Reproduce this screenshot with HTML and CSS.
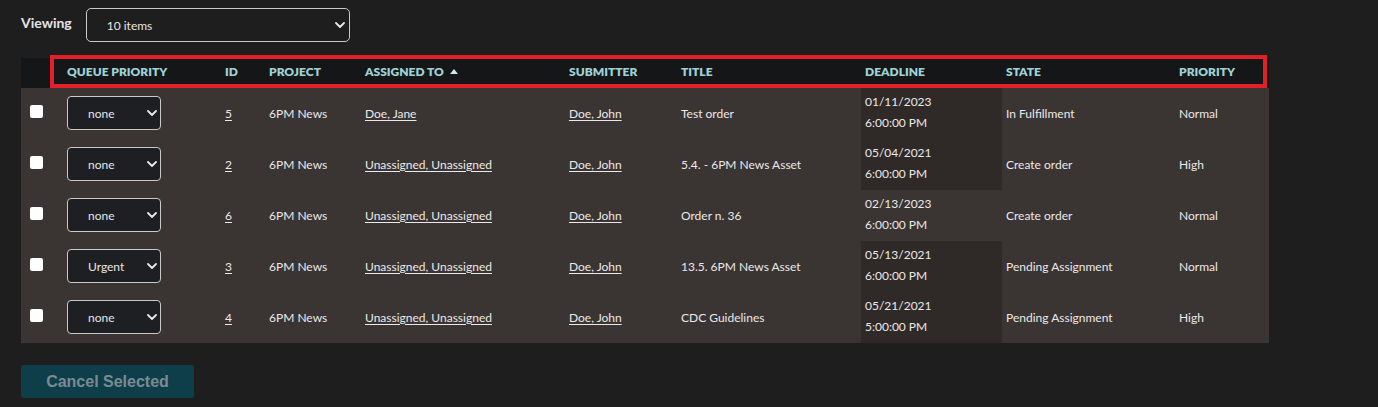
FILE: index.html
```html
<!DOCTYPE html>
<html>
<head>
<meta charset="utf-8">
<link rel="stylesheet" href="styles.css">
</head>
<body>
<div class="page">
  <div class="toolbar">
    <span class="viewing-label">Viewing</span>
    <div class="select-wrap viewing-select">
      <select><option>10 items</option></select>
      <svg class="chev" viewBox="0 0 10 6" width="10" height="6"><path d="M1 1 L5 5 L9 1" fill="none" stroke="#e8e8e8" stroke-width="1.8" stroke-linecap="round" stroke-linejoin="round"/></svg>
    </div>
  </div>

  <div class="table-wrap">
    <table class="grid">
      <colgroup>
        <col class="c-check"><col class="c-queue"><col class="c-id"><col class="c-project"><col class="c-assigned"><col class="c-submitter"><col class="c-title"><col class="c-deadline"><col class="c-state"><col class="c-priority">
      </colgroup>
      <thead>
        <tr>
          <th></th>
          <th>Queue Priority</th>
          <th>ID</th>
          <th>Project</th>
          <th>Assigned To <span class="sort-up"></span></th>
          <th>Submitter</th>
          <th>Title</th>
          <th>Deadline</th>
          <th>State</th>
          <th>Priority</th>
        </tr>
      </thead>
      <tbody>
        <tr>
          <td class="check"><input type="checkbox"></td>
          <td><div class="select-wrap row-select"><select><option>none</option></select><svg class="chev" viewBox="0 0 10 6" width="10" height="6"><path d="M1 1 L5 5 L9 1" fill="none" stroke="#e8e8e8" stroke-width="1.8" stroke-linecap="round" stroke-linejoin="round"/></svg></div></td>
          <td><a href="#">5</a></td>
          <td>6PM News</td>
          <td><a href="#">Doe, Jane</a></td>
          <td><a href="#">Doe, John</a></td>
          <td>Test order</td>
          <td class="deadline overdue">01/11/2023<br>6:00:00 PM</td>
          <td>In Fulfillment</td>
          <td>Normal</td>
        </tr>
        <tr>
          <td class="check"><input type="checkbox"></td>
          <td><div class="select-wrap row-select"><select><option>none</option></select><svg class="chev" viewBox="0 0 10 6" width="10" height="6"><path d="M1 1 L5 5 L9 1" fill="none" stroke="#e8e8e8" stroke-width="1.8" stroke-linecap="round" stroke-linejoin="round"/></svg></div></td>
          <td><a href="#">2</a></td>
          <td>6PM News</td>
          <td><a href="#">Unassigned, Unassigned</a></td>
          <td><a href="#">Doe, John</a></td>
          <td>5.4. - 6PM News Asset</td>
          <td class="deadline overdue">05/04/2021<br>6:00:00 PM</td>
          <td>Create order</td>
          <td>High</td>
        </tr>
        <tr>
          <td class="check"><input type="checkbox"></td>
          <td><div class="select-wrap row-select"><select><option>none</option></select><svg class="chev" viewBox="0 0 10 6" width="10" height="6"><path d="M1 1 L5 5 L9 1" fill="none" stroke="#e8e8e8" stroke-width="1.8" stroke-linecap="round" stroke-linejoin="round"/></svg></div></td>
          <td><a href="#">6</a></td>
          <td>6PM News</td>
          <td><a href="#">Unassigned, Unassigned</a></td>
          <td><a href="#">Doe, John</a></td>
          <td>Order n. 36</td>
          <td class="deadline">02/13/2023<br>6:00:00 PM</td>
          <td>Create order</td>
          <td>Normal</td>
        </tr>
        <tr>
          <td class="check"><input type="checkbox"></td>
          <td><div class="select-wrap row-select"><select><option>Urgent</option></select><svg class="chev" viewBox="0 0 10 6" width="10" height="6"><path d="M1 1 L5 5 L9 1" fill="none" stroke="#e8e8e8" stroke-width="1.8" stroke-linecap="round" stroke-linejoin="round"/></svg></div></td>
          <td><a href="#">3</a></td>
          <td>6PM News</td>
          <td><a href="#">Unassigned, Unassigned</a></td>
          <td><a href="#">Doe, John</a></td>
          <td>13.5. 6PM News Asset</td>
          <td class="deadline overdue">05/13/2021<br>6:00:00 PM</td>
          <td>Pending Assignment</td>
          <td>Normal</td>
        </tr>
        <tr>
          <td class="check"><input type="checkbox"></td>
          <td><div class="select-wrap row-select"><select><option>none</option></select><svg class="chev" viewBox="0 0 10 6" width="10" height="6"><path d="M1 1 L5 5 L9 1" fill="none" stroke="#e8e8e8" stroke-width="1.8" stroke-linecap="round" stroke-linejoin="round"/></svg></div></td>
          <td><a href="#">4</a></td>
          <td>6PM News</td>
          <td><a href="#">Unassigned, Unassigned</a></td>
          <td><a href="#">Doe, John</a></td>
          <td>CDC Guidelines</td>
          <td class="deadline overdue">05/21/2021<br>5:00:00 PM</td>
          <td>Pending Assignment</td>
          <td>High</td>
        </tr>
      </tbody>
    </table>
    <div class="highlight-box"></div>
  </div>

  <button class="cancel-btn" type="button">Cancel Selected</button>
</div>
</body>
</html>
```
FILE: styles.css
```css
html, body {
  margin: 0;
  padding: 0;
  background: #1f1e1e;
}

.page {
  padding: 8px 0 0 21px;
  font-family: Lato, "Noto Sans", sans-serif;
  color: #e8e6e6;
}

.toolbar {
  display: flex;
  align-items: center;
  gap: 14px;
  height: 34px;
}

.viewing-label {
  font-weight: 700;
  font-size: 14px;
  color: #e4e4e4;
  margin-top: -5px;
}

.select-wrap {
  position: relative;
  display: inline-block;
}

.select-wrap select {
  appearance: none;
  -webkit-appearance: none;
  font-family: Lato, "Noto Sans", sans-serif;
  color: #e8e6e6;
  border: 1px solid #c9c9c9;
  border-radius: 5px;
  outline: none;
  display: block;
}

.select-wrap .chev {
  position: absolute;
  top: 50%;
  margin-top: -3px;
  pointer-events: none;
}

.viewing-select select {
  width: 264px;
  height: 34px;
  padding: 0 0 0 20px;
  font-size: 12px;
  background: #1f1e1e;
}

.viewing-select .chev {
  right: 5px;
}

.row-select select {
  width: 94px;
  height: 34px;
  padding: 0 0 0 20px;
  font-size: 12px;
  background: #1e1f22;
  border-radius: 4px;
}

.row-select .chev {
  right: 4px;
}

.table-wrap {
  position: relative;
  margin-top: 16px;
  width: 1248px;
}

.grid {
  border-collapse: collapse;
  table-layout: fixed;
  width: 1248px;
  font-size: 12px;
}

.c-check { width: 42px; }
.c-queue { width: 158px; }
.c-id { width: 44px; }
.c-project { width: 96px; }
.c-assigned { width: 204px; }
.c-submitter { width: 112px; }
.c-title { width: 184px; }
.c-deadline { width: 141px; }
.c-state { width: 173px; }
.c-priority { width: 94px; }

.grid thead tr {
  background: #141617;
  height: 30px;
}

.grid th {
  text-align: left;
  padding: 0 4px 4px;
  font-weight: 800;
  font-size: 12px;
  text-transform: uppercase;
  color: #9fd2d6;
  white-space: nowrap;
}

.sort-up {
  display: inline-block;
  width: 0;
  height: 0;
  border-left: 4px solid transparent;
  border-right: 4px solid transparent;
  border-bottom: 5px solid #cfe6e8;
  margin-left: 3px;
  vertical-align: 2px;
}

.grid tbody tr {
  background: #3a3433;
  height: 51px;
}

.grid td {
  padding: 0 4px 1px;
  vertical-align: middle;
  white-space: nowrap;
  color: #ebe9e9;
}

.grid td.check {
  padding-left: 9px;
}

.grid input[type="checkbox"] {
  appearance: none;
  -webkit-appearance: none;
  width: 13px;
  height: 13px;
  margin: 0;
  background: #ffffff;
  border-radius: 2px;
  display: block;
  margin-top: -3px;
}

.grid a {
  color: #ebe9e9;
  text-decoration: underline;
  text-underline-offset: 2px;
}

.grid td.deadline {
  line-height: 21px;
  padding-bottom: 3px;
}

.grid td.overdue {
  background: #2f2928;
}

.highlight-box {
  position: absolute;
  left: 29px;
  top: -3px;
  width: 1217px;
  height: 33px;
  border: 4px solid #e3202a;
  box-sizing: border-box;
  pointer-events: none;
}

.cancel-btn {
  display: block;
  margin-top: 22px;
  width: 173px;
  height: 33px;
  background: #0f3e4b;
  border: none;
  border-radius: 3px;
  color: #7b8b90;
  font-family: "Liberation Sans", Arial, sans-serif;
  font-weight: 700;
  font-size: 16px;
  padding: 0;
}
```
